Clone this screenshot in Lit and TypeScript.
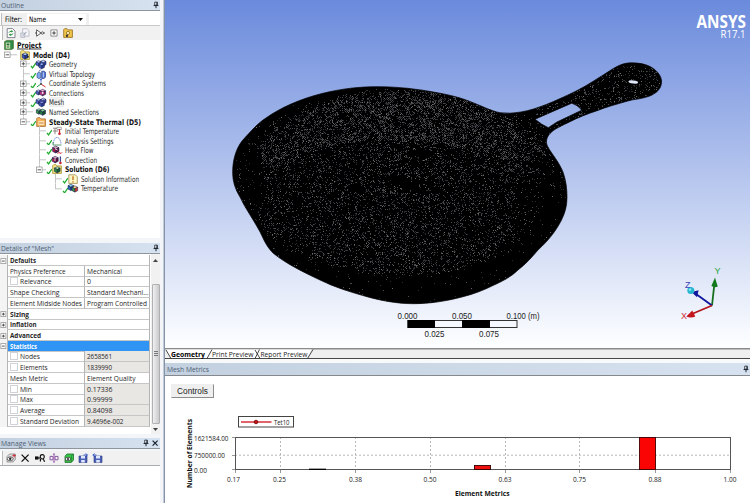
import { LitElement, html, css, svg, nothing } from "lit";
import { customElement } from "lit/decorators.js";

/* ---------- small icon set ---------- */
const cube = (a: string, b: string, c: string, x = 0, y = 0, s = 1) => svg`<g transform="translate(${x} ${y}) scale(${s})" stroke="#1b2050" stroke-width=".6" stroke-linejoin="round">
  <path d="M0 2 3 .5 6 2 3 3.5Z" fill=${a} /><path d="M0 2 3 3.5V7L0 5.5Z" fill=${b} /><path d="M6 2 3 3.5V7L6 5.5Z" fill=${c} /></g>`;
const cubes = svg`${cube("#a9c3ff", "#4a6fd0", "#2b459c", 0, 1.2, 0.85)}${cube("#c2d4ff", "#5c82e0", "#2b459c", 4.6, 0.6, 0.9)}${cube("#8fb0ff", "#3a5cc4", "#203a90", 3, 3.5, 0.9)}`;
const folder = svg`<path d="M.7 9.4V1.6L1.6.7H4l1 1.2h4.4v7.5Z" fill="#f7e68a" stroke="#a5902a" stroke-width=".8"/>`;
const disk = svg`<path d="M1 3h8v6.5H1Z" fill="#4b62b8" stroke="#27357a" stroke-width=".6"/><path d="M3 3h4v2.4H3ZM3.2 7h3.6v2.5H3.2Z" fill="#dfe7ff"/>`;
const ICONS: Record<string, unknown> = {
  project: svg`<path d="M.6 1.6 2.8.4h6.600v8L7.400 9.6H.6Z" fill="#2c8a49" stroke="#4c6a26" stroke-width=".7"/><path d="M1.800 2.600h4.400v6H1.800Z" fill="#e8edc0"/><path d="M2.600 3.600h2.800v1.800H2.600ZM2.600 6.600h2.800v1H2.600Z" fill="#287040"/>`,
  model: svg`${folder}${cube("#a9c3ff", "#3a5cc4", "#203a90", 2.2, 2.4, 0.95)}<path d="M7 6.8h2" stroke="#222"/>`,
  geometry: cubes,
  mesh: svg`${cubes}<path d="M1 4.5h8M5 2v6.5M7.5 2v6" stroke="#4b3f92" stroke-width=".5"/>`,
  topology: svg`<path d="M1 4.5 3 3l2 1.2v4.3L3 9.7 1 8.5Z" fill="#7fa5ea" stroke="#27407e" stroke-width=".6"/><path d="M5.7 2.2h2.6l1.2 1v5L8 9.5H5.7Z" fill="#4b73d6" stroke="#1e3170" stroke-width=".6"/><path d="M3 2.5 4.6.6" stroke="#27407e" stroke-width=".8"/><path d="M7.3 3.4v5" stroke="#dce6ff" stroke-width=".9"/>`,
  coords: svg`<path d="M5 6V1" stroke="#2b55cc" stroke-width="1" stroke-dasharray="1.6 .7"/><path d="M5 6 9.5 9" stroke="#d22" stroke-width="1"/><path d="M5 6 .8 9" stroke="#1c9a3c" stroke-width="1"/><circle cx="5" cy="6" r="1" fill="#555"/><path d="m3.8 2 1.2-1.8L6.2 2Z" fill="#2b55cc"/>`,
  connections: svg`${cube("#a9c3ff", "#5470c8", "#2b459c", 0, 1.4, 0.8)}${cube("#f4a6d0", "#c22a7c", "#7d1650", 3.6, 0.8, 1)}<circle cx="6.7" cy="5" r="1.3" fill="#fff" stroke="#8a1460" stroke-width=".6"/>`,
  named: svg`${cube("#9be29f", "#2f9a3e", "#17692a", 0.3, 1.2, 0.85)}${cube("#7fd289", "#23863a", "#105221", 3.8, 1.6, 0.95)}`,
  thermal: svg`<path d="M.7 9.4V1.6L1.6.7H4l1 1.2h4.4v7.5Z" fill="#f5b45c" stroke="#a5662a" stroke-width=".8"/><path d="M2.5 4h5.6v4H2.5Z" fill="#fbe3b9"/><path d="M3 6h4.6" stroke="#c86a2a" stroke-width=".8"/>`,
  initial: svg`<path d="M1 2.2h4M3 2.2v6M1 5h5" stroke="#7c6a6a" stroke-width=".8"/><path d="M5 1.3h4.3v2.2H5Z" fill="#fff" stroke="#555" stroke-width=".5"/><path d="M7.5 3v4" stroke="#c8232e" stroke-width="1.2"/><circle cx="7.5" cy="7.8" r="1.3" fill="#c8232e"/>`,
  settings: svg`<path d="M1.4 7.5Q2 1.5 5 1.5T9 7.5" fill="none" stroke="#3d6ad0" stroke-width=".8" stroke-dasharray="1.4 .6"/><path d="M1 9h8.5M1 9V6" stroke="#33804a" stroke-width=".8"/>`,
  heat: svg`${cube("#e9a2bb", "#b3164c", "#5c0d2c", 0.6, 0.6, 1.05)}<path d="M5.5 8.5q1.4-1.7 2.5-.5t2-.6" stroke="#d2202c" fill="none"/><path d="M3 3.8 5.5 5" stroke="#fff" stroke-width=".8"/>`,
  convection: svg`${cube("#e9a2bb", "#b3164c", "#5c0d2c", 0.2, 0.8, 1)}<path d="M3 3.8v2.4" stroke="#fff" stroke-width=".8"/><path d="M8.4 1.4v6" stroke="#404a8a" stroke-width="1.3"/><circle cx="8.4" cy="8" r="1.3" fill="#d2202c"/>`,
  solution: svg`${folder}${cube("#a5e8a2", "#29943b", "#12602a", 2.4, 2.2, 0.95)}`,
  info: svg`<path d="M.8.8h6.5l2 2v6.6H.8Z" fill="#fff8c8" stroke="#8a7a34" stroke-width=".7"/><path d="M5 2.2v3.8M5 7.2v1.2" stroke="#c06a10" stroke-width="1.3"/>`,
  temperature: svg`${cube("#7fd8ef", "#2a66c8", "#1f449c", 0, 0.8, 0.95)}${cube("#ffe17a", "#35a04a", "#d23a2a", 4, 2.4, 0.95)}`,
  refresh: svg`<path d="M1.2.6h5.4L9 3v6.6H1.2Z" fill="#fff" stroke="#556" stroke-width=".7"/><path d="M3 4.6Q3.6 2.8 5.8 3.4M7 5.4Q6.4 7.4 4.2 6.8" fill="none" stroke="#1f8d35" stroke-width="1"/><path d="m5.4 2 1.8 1.6-2 1ZM4.6 8.2 2.8 6.6l2-1Z" fill="#1f8d35"/>`,
  sheet: svg`<path d="M2.6.8h4.6L9 2.6v5.6H2.6Z" fill="#f6f6fa" stroke="#a9adb8" stroke-width=".7"/><path d="M.8 5h4v4.4h-4Z" fill="#dfe1ea" stroke="#a0a4b3" stroke-width=".6"/><path d="m3 7.6 3.6-3.8" stroke="#8a90a4" stroke-width=".9"/>`,
  probe: svg`<path d="M1.6 1.8v6.4L6 5Z" fill="#fff" stroke="#333" stroke-width=".8"/><path d="M0 5h1.6M8.6 5H10" stroke="#333" stroke-width=".8"/><circle cx="7.4" cy="5" r="1.2" fill="none" stroke="#333" stroke-width=".7"/>`,
  expand: svg`<path d="M1.9 1.9h6.2v6.2H1.9Z" fill="#fff" stroke="#777" stroke-width=".8"/><path d="M3.2 5h3.6M5 3.2v3.6" stroke="#222" stroke-width=".8"/>`,
  gearFolder: svg`<path d="M.7 9.4V1.6L1.6.7H4l1 1.2h4.4v7.5Z" fill="#f2c64a" stroke="#8f6a18" stroke-width=".8"/><circle cx="5" cy="5" r="1.6" fill="#fff2bd" stroke="#7b5a10" stroke-width=".7"/><circle cx="4" cy="7.8" r="1.2" fill="#403a2a"/>`,
  view: svg`<path d="M1 3.5 3.5 1h5.8v5.5L7 9H1Z" fill="#dcdcdc" stroke="#666" stroke-width=".6"/><ellipse cx="4.2" cy="5.8" rx="3" ry="1.9" fill="#fff" stroke="#333" stroke-width=".7"/><circle cx="4.2" cy="5.8" r="1.2" fill="#222"/><path d="M6.4 2.6h3.4M8.1 1v3.3" stroke="#c9202a" stroke-width=".9"/>`,
  close: svg`<path d="m1.6 1.6 7 7M8.6 1.6l-7 7" stroke="#111" stroke-width="1.3"/>`,
  rename: svg`<path d="M0 3.4h3.400v3.200H0Z" fill="#111"/><path d="M3 5h2.400" stroke="#111" stroke-width="1.200"/><path d="M5.400 4.600Q4.800 1.600 7.200 1.600T9.200 4.200Q9 6 7.200 6 6 6 5.400 4.600M8 5.600l1.600 3.200M5.400 6v2.600" fill="none" stroke="#111" stroke-width="1.200"/>`,
  edit: svg`<path d="M1 3.4h3v3.4H1ZM6 3.4h3v3.4H6Z" fill="none" stroke="#7e4a9a" stroke-width=".9"/><path d="M5 1v8M4 1h2M4 9h2" stroke="#8e3fa6" stroke-width=".8"/>`,
  apply: svg`<path d="M1 3.2 3 1h6.5v6L7.4 9.4H1Z" fill="#39c648" stroke="#1a6e2a" stroke-width=".8"/><ellipse cx="4" cy="6" rx="2.7" ry="1.7" fill="#fff" stroke="#333" stroke-width=".7"/><circle cx="4" cy="6" r="1" fill="#222"/><path d="M7.4 3v6M7.4 3 9.3 1" stroke="#1a6e2a" stroke-width=".6"/>`,
  importView: svg`${disk}<path d="M5.5 2h3.8M7.6.6 9.6 2 7.6 3.5" stroke="#3355cc" fill="none" stroke-width=".9"/>`,
  exportView: svg`<g transform="translate(1)">${disk}</g><path d="M4.5 2H1M2.6.6.8 2l1.8 1.5" stroke="#3355cc" fill="none" stroke-width=".9"/>`,
  pin: svg`<path d="M3.4 1.400h3.200v3.800H3.400Z" fill="#fff" stroke="#16202e" stroke-width="1"/><path d="M6.200 1.400v3.800M2 5.700h6M5 6v3" stroke="#16202e" stroke-width="1.2"/>`,
  x: svg`<path d="m2.6 2.6 5 5M7.6 2.6l-5 5" stroke="#16202e" stroke-width="1.2"/>`,
};
const icon = (name: string, size = 10) =>
  html`<svg class="icon" width=${size} height=${size} viewBox="0 0 10 10">${ICONS[name]}</svg>`;

const iconCss = css`
  :host { display: block; box-sizing: border-box; }
  .icon { display: block; flex: none; overflow: visible; }
`;

/* ---------- model tree ---------- */
interface Node { label: string; icon: string; level: number; box?: "+" | "-"; bold?: boolean; check?: boolean; sel?: boolean; width: number }
const TREE: Node[] = [
  { label: "Model (D4)", icon: "model", level: 0, box: "-", bold: true, width: 37 },
  { label: "Geometry", icon: "geometry", level: 1, box: "+", check: true, width: 28 },
  { label: "Virtual Topology", icon: "topology", level: 1, check: true, width: 46 },
  { label: "Coordinate Systems", icon: "coords", level: 1, box: "+", check: true, width: 57 },
  { label: "Connections", icon: "connections", level: 1, box: "+", check: true, width: 35 },
  { label: "Mesh", icon: "mesh", level: 1, box: "+", check: true, sel: true, width: 15 },
  { label: "Named Selections", icon: "named", level: 1, box: "+", width: 50 },
  { label: "Steady-State Thermal (D5)", icon: "thermal", level: 1, box: "-", bold: true, check: true, width: 92 },
  { label: "Initial Temperature", icon: "initial", level: 2, check: true, width: 54 },
  { label: "Analysis Settings", icon: "settings", level: 2, check: true, width: 48.5 },
  { label: "Heat Flow", icon: "heat", level: 2, check: true, width: 28.5 },
  { label: "Convection", icon: "convection", level: 2, check: true, width: 32 },
  { label: "Solution (D6)", icon: "solution", level: 2, box: "-", bold: true, check: true, width: 44.5 },
  { label: "Solution Information", icon: "info", level: 3, check: true, width: 58 },
  { label: "Temperature", icon: "temperature", level: 3, check: true, width: 37 },
];

/* A single line of text set to a fixed measure. */
const line = (s: string, w: number, cls = "") =>
  html`<svg class="line ${cls}" width=${w} height="10"><text x="0" y="7.6" textLength=${w} lengthAdjust="spacingAndGlyphs">${s}</text></svg>`;

@customElement("outline-tree")
class OutlineTree extends LitElement {
  static styles = [iconCss, css`
    :host { height: 198px; padding-top: .4px; background: #fff; font: 7.8px "DejaVu Sans Condensed", "DejaVu Sans", sans-serif; color: #222; }
    .row { display: flex; align-items: center; height: 9.55px; }
    .pad { flex: none; width: 16px; height: 100%; }
    .lead { display: block; flex: none; }
    .line { display: block; flex: none; overflow: visible; margin-left: 3px; }
    .line text { fill: #2a2a2a; }
    .bold text { font-weight: 700; fill: #111; }
    .sel { background: #f0f0f0; }
    .under { text-decoration: underline; }
    .root { padding-left: 4px; }
    .root .line { margin-left: 2.5px; }
  `];
  render() {
    return html`
      <div class="row root">${icon("project")}${line("Project", 24.5, "bold under")}</div>
      ${TREE.map((n, i) => {
        const pads = [];
        for (let l = 0; l < n.level; l++) pads.push(html`<div class="pad"></div>`);
        const more = TREE.slice(i + 1).findIndex((m) => m.level <= n.level);
        const cont = more >= 0 && TREE[i + 1 + more].level === n.level;
        return html`<div class="row">${pads}
          <svg class="lead" width="20" height="9.55" viewBox="0 0 20 9.55">
            ${n.level ? svg`<path d="M7.5 0V${cont ? 9.6 : 4.8}" stroke="#c4c4c4" fill="none"/>` : nothing}
            <path d="M7 4.8H${n.check ? 14 : 17}" stroke="#c4c4c4"/>
            ${n.box ? svg`<rect x="4.5" y="2" width="5.6" height="5.6" fill="#fff" stroke="#999" stroke-width=".8"/><path d="M5.6 4.8h3.4${n.box === "+" ? "M7.3 3.1v3.4" : ""}" stroke="#333" stroke-width=".8"/>` : nothing}
            ${n.check ? svg`<path d="m15 7 1.600 1.900L19.800 4.200" fill="none" stroke="#1fae30" stroke-width="1.200"/>` : nothing}
          </svg>
          ${icon(n.icon)}${line(n.label, n.width, `${n.bold ? "bold" : ""} ${n.sel ? "sel" : ""}`)}
        </div>`;
      })}`;
  }
}

/* ---------- details grid ---------- */
interface Row { name: string; w: number; value?: string; vw?: number; group?: "+" | "-"; box?: boolean; grey?: boolean; sel?: boolean }
const ROWS: Row[] = [
  { name: "Defaults", w: 26, group: "-" },
  { name: "Physics Preference", w: 55.5, value: "Mechanical", vw: 35 },
  { name: "Relevance", w: 31.5, value: "0", vw: 4, box: true },
  { name: "Shape Checking", w: 49.5, value: "Standard Mechani...", vw: 61.5 },
  { name: "Element Midside Nodes", w: 72, value: "Program Controlled", vw: 60 },
  { name: "Sizing", w: 19, group: "+" },
  { name: "Inflation", w: 26.5, group: "+" },
  { name: "Advanced", w: 31, group: "+" },
  { name: "Statistics", w: 27, group: "-", sel: true },
  { name: "Nodes", w: 20, value: "2658561", vw: 25, box: true, grey: true },
  { name: "Elements", w: 27.5, value: "1839990", vw: 25, box: true, grey: true },
  { name: "Mesh Metric", w: 38, value: "Element Quality", vw: 48.5 },
  { name: "Min", w: 12, value: "0.17336", vw: 25.5, box: true, grey: true },
  { name: "Max", w: 13, value: "0.99999", vw: 25.5, box: true, grey: true },
  { name: "Average", w: 25, value: "0.84098", vw: 25.5, box: true, grey: true },
  { name: "Standard Deviation", w: 59, value: "9.4696e-002", vw: 36.5, box: true, grey: true },
];

@customElement("details-grid")
class DetailsGrid extends LitElement {
  static styles = [iconCss, css`
    :host { display: flex; height: 180.3px; background: #fff; font: 7.6px "Open Sans", "Noto Sans", sans-serif; }
    .rows { width: 150px; padding-top: 1.5px; }
    .row { display: grid; grid-template-columns: 7px 77px 66px; height: 10.73px; }
    .cell { display: flex; align-items: center; border-left: 1px solid #b4b4b4; border-bottom: 1px solid #c6c6c6; padding-left: 2px; box-sizing: border-box; }
    .value { border-right: 1px solid #b4b4b4; }
    .wide { grid-column: 2 / 4; padding-left: 1.5px; border-right: 1px solid #b4b4b4; }
    .wide text { font-weight: 700; fill: #111; }
    .grey { background: #e9e7e4; }
    .sel .wide { background: #3094f4; }
    .sel .wide text { fill: #fff; }
    .line { display: block; flex: none; overflow: visible; }
    .line text { fill: #262626; }
    .tick { width: 6px; height: 6px; border: 1px solid #cfd2d6; background: #fff; margin-right: 2.5px; flex: none; margin-left: -.5px; }
    .gut { background: #f4f4f4; display: flex; align-items: center; }
    .bar { display: flex; flex-direction: column; align-items: center; justify-content: space-between; width: 9px; margin-left: 1px; background: #f1f1f1; padding: 5px 0 3px; box-sizing: border-box; }
    .thumb { display: flex; flex-direction: column; align-items: center; justify-content: center; gap: 1px; width: 8px; height: 140px; margin-top: 22px; margin-bottom: auto; border: 1px solid #b0b0b0; border-radius: 1px; box-sizing: border-box; background: linear-gradient(90deg, #f0f0f0, #c9c9cc); }
    .grip { width: 4px; height: 1px; background: #777; }
  `];
  render() {
    return html`<div class="rows">${ROWS.map((r) => html`
      <div class="row ${r.sel ? "sel" : ""}">
        <div class="gut">${r.group ? html`<svg class="icon" width="7" height="8"><rect x=".9" y="1.6" width="5" height="5" fill="#fff" stroke="#999" stroke-width=".8"/><path d="M2 4.1h2.8${r.group === "+" ? "M3.4 2.7v2.8" : ""}" stroke="#333" stroke-width=".8"/></svg>` : nothing}</div>
        ${r.group
          ? html`<div class="cell wide">${line(r.name, r.w)}</div>`
          : html`<div class="cell">${r.box ? html`<span class="tick"></span>` : nothing}${line(r.name, r.w)}</div>
              <div class="cell value ${r.grey ? "grey" : ""}">${line(r.value!, r.vw!)}</div>`}
      </div>`)}</div>
      <div class="bar">
        <svg width="5" height="3"><path d="M0 3 2.5 0 5 3Z" fill="#444"/></svg>
        <div class="thumb"><i class="grip"></i><i class="grip"></i><i class="grip"></i></div>
        <svg width="5" height="3"><path d="M0 0 2.5 3 5 0Z" fill="#444"/></svg>
      </div>`;
  }
}

/* ---------- 3D viewport ---------- */
const PAN = "M232.7 173C232.5 160 236 149 242 141C251 131 258 123 266 118C280 108 300 99 322 93.500C342 88.500 360 86.700 378 86.700C398 86.700 418 89 436 92.500C450 95 460 97.500 470 101.500C482 106 491 111 500 112.700Q510 114 521 112C538 109 555 101 570 94C583 88 592 82 600 77C610 71 617 65 626 63.300C633 62.300 641 63 647 65.200C656 68.500 662 76 661.500 82C661.500 89 656 93.500 649 96.300C642 99 634 99 627 101.200C616 104.500 606 107 597 110.700C587 114 578 117.500 570 121.700C562 125.500 554 129 550 133.500C546 138 545.500 143 548 147C551 153 560 163 563.500 173.500C566 181 567 189 567 197C567 206 565 213 561.500 220C556 231 548 241 538 250C532 257 526 264 518 270C511 277 502 281.500 493 285.500C484 290 474 294 463 296.700C447 301 430 303.700 413 303.700C397 303.700 381 300.500 367 296.700C350 292 334 287 320 280C303 272 285 263 273 253C265 245 263 237 259 230C253 219 245 208 240 197C235 189 232.700 181 232.700 173ZM535 119.200 571.700 103.200Q578 105 581.700 110.200L557 122 548.300 127.700Q542 125 535 119.200Z";

/* Mesh facets: sparse one-pixel flecks whose density follows the surface. */
const flecks = (() => {
  let seed = 20177;
  const rnd = () => ((seed = (seed * 1664525 + 1013904223) >>> 0) / 4294967296);
  const e = (x: number, y: number, cx: number, cy: number, rx: number, ry: number) => ((x - cx) / rx) ** 2 + ((y - cy) / ry) ** 2;
  const patch = Array.from({ length: 110 * 64 }, () => 0.35 + rnd() * 1.3);
  const out = ["", "", ""];
  for (let y = 66; y < 302; y++) {
    for (let x = 234; x < 660; x++) {
      const v = rnd(), tone = rnd();
      let d = 0.01;
      if (x > 535 && y < 128) d = 0.13;
      else if (e(x, y, 400, 183, 160, 95) < 1 && y < 282) {
        const floor = e(x, y, 393, 222, 150, 83) < 1;
        d = floor ? 0.26 : 0.5;
        if (!floor && y > 185) d = 0.12;
        d *= 1 - 0.3 * Math.min(1, Math.abs(x - 400) / 160);
        d *= Math.min(1, (1.02 - e(x, y, 400, 183, 160, 95)) * 7);
        if (e(x, y, 545, 205, 30, 50) < 1) d *= 0.35;
        const core = Math.min(e(x - (y - 183) * 1.2, y, 403, 183, 17, 9), e(x, y, 422, 153, 15, 4), e(x, y, 355, 187, 8, 5));
        if (core < 1.4) d *= Math.max(0.06, core - 0.4);
        if (e(x, y, 246, 180, 18, 30) < 1) d = 0.03;
        d *= patch[((y - 60) >> 2) * 110 + ((x - 230) >> 2)];
        if ((x + y) % 2) d *= 0.4;
      } else if (e(x, y, 400, 178, 165, 90) < 1) d = 0.08;
      if (v < d) out[tone < 0.55 ? 0 : tone < 0.93 ? 1 : 2] += `M${x} ${y}h1v1h-1z`;
    }
  }
  return out;
})();

@customElement("model-view")
class ModelView extends LitElement {
  static styles = css`
    :host { display: block; height: 348px; background: linear-gradient(#6a8adc, #fdfeff 346px); }
    .scene { display: block; font-family: "Liberation Sans", Arial, sans-serif; }
    .logo { font: 700 17px "Open Sans", "Noto Sans", sans-serif; fill: #fff; }
    .ver { font: 10.4px "Open Sans", "Noto Sans", sans-serif; fill: #fff; }
    .scale { font-size: 8.4px; fill: #222; }
    .axis { font-size: 9px; }
  `;
  render() {
    const tick = (s: string, x: number, y: number, w: number) => svg`<text class="scale" x=${x} y=${y} textLength=${w} lengthAdjust="spacingAndGlyphs">${s}</text>`;
    return html`<svg class="scene" width="585" height="348" viewBox="165 0 585 348">
      <defs><clipPath id="pan"><path d=${PAN} clip-rule="evenodd"/></clipPath></defs>
      <path d=${PAN} fill="#000" fill-rule="evenodd"/>
      <g clip-path="url(#pan)" shape-rendering="crispEdges">
        <path d=${flecks[0]} fill="#2b2d31"/><path d=${flecks[1]} fill="#484a4d"/><path d=${flecks[2]} fill="#6d6b66"/>
      </g>
      <path d=${PAN} fill="none" stroke="#000" stroke-width=".7"/>
      <ellipse cx="633.300" cy="82" rx="4.800" ry="1.600" fill="#dfe7fb" transform="rotate(6 633 82)"/>
      <text class="logo" x="696.500" y="27.500" textLength="49.500" lengthAdjust="spacingAndGlyphs">ANSYS</text>
      <text class="ver" x="720.500" y="38" textLength="25" lengthAdjust="spacingAndGlyphs">R17.1</text>
      ${tick("0.000", 397.5, 318.8, 20)}${tick("0.050", 452, 318.8, 20)}${tick("0.100 (m)", 506.5, 318.8, 33)}
      ${tick("0.025", 424.5, 336.8, 20)}${tick("0.075", 479, 336.8, 20)}
      <rect x="408" y="320.500" width="109" height="7" fill="#f5f8ff" stroke="#333" stroke-width="1"/>
      <path d="M407.500 320h27.500v8h-27.500ZM462 320h28v8h-28Z" fill="#000"/>
      <path d="M712 305.500 714.500 283" stroke="#156e1a" stroke-width="1.800"/><path d="M711.300 286 715 277.500 717.800 286.500Q714.500 288 711.300 286Z" fill="#137a1c"/>
      <path d="M712 305.500 696 294" stroke="#10169c" stroke-width="1.800"/><path d="m698.600 290.300-1.600 7-5.500-5.300Z" fill="#10169c"/><circle cx="690.800" cy="290.500" r="3.500" fill="#27b5cf"/><circle cx="690" cy="289.600" r="1.300" fill="#7de4ef"/>
      <path d="M712 305.500 693 313.500" stroke="#b3161c" stroke-width="1.800"/><path d="M686.300 316.500 692.300 310.500 695.300 316.500Q691 318.500 686.300 316.500Z" fill="#c4151c"/>
      <text class="axis" x="714.500" y="273.500" fill="#2ba53c">Y</text>
      <text class="axis" x="685" y="287.500" fill="#3a41b8">Z</text>
      <text class="axis" x="681" y="319.300" fill="#cf2a34">X</text>
    </svg>`;
  }
}

/* ---------- metrics chart ---------- */
@customElement("metrics-chart")
class MetricsChart extends LitElement {
  static styles = css`
    :host { display: block; flex: 1; background: #fff; padding: 8px 0 0 6px; }
    .btn { display: block; width: 43px; height: 14px; padding: 0; border: 1px solid; border-color: #eee #8d8d8d #8d8d8d #eee; background: #efefef; font: 8.300px/12px "Liberation Sans", Arial, sans-serif; color: #222; text-align: center; }
    .plot { display: block; margin: -22px 0 0 -6px; pointer-events: none; font: 7.500px "Open Sans", "Noto Sans", sans-serif; }
    .bold { font-weight: 700; fill: #111; }
  `;
  render() {
    const t = (s: string, x: number, y: number, w: number, cls = "") => svg`<text class=${cls} x=${x} y=${y} textLength=${w} lengthAdjust="spacingAndGlyphs" fill="#222">${s}</text>`;
    const ticks: [string, number][] = [["0.17", 233.5], ["0.25", 279.5], ["0.38", 355.5], ["0.50", 430], ["0.63", 505], ["0.75", 579.5], ["0.88", 655], ["1.00", 730]];
    return html`<button class="btn">Controls</button>
      <svg class="plot" width="585" height="127" viewBox="165 376 585 127">
        <rect x="238.500" y="416.500" width="55" height="10.500" fill="#fff" stroke="#444"/>
        <path d="M241 422h30.500" stroke="#d01018" stroke-width="1.300"/><circle cx="256" cy="422" r="1.800" fill="#d01018" stroke="#600" stroke-width=".8"/>
        ${t("Tet10", 274, 424.8, 15.5)}
        <path d="M235 455.200h495M280.500 437v33M355.500 437v33M430.500 437v33M505.500 437v33M579.500 437v33M655 437v33" stroke="#b8b8b8" stroke-dasharray="2 2" fill="none"/>
        <path d="M232 437.500h3M232 455.500h3M232 469.500h3M235.500 470v3M280.500 470v3M355.500 470v3M430.500 470v3M505.500 470v3M579.500 470v3M655.500 470v3M730.500 470v3" stroke="#999"/>
        <rect x="235.500" y="437.500" width="495" height="32" fill="none" stroke="#555"/>
        <path d="M309 469.300h17" stroke="#000" stroke-width="1.300"/>
        <rect x="474.500" y="465.500" width="16" height="4" fill="#f01010" stroke="#300" stroke-width=".9"/>
        <rect x="639.500" y="437.500" width="16" height="32" fill="#fb0404" stroke="#400" stroke-width=".9"/>
        ${t("1621584.00", 194, 440.6, 34.5)}${t("750000.00", 194, 458.4, 31)}${t("0.00", 194, 473.2, 13)}
        ${ticks.map(([s, x]) => t(s, x - 6.5, 482.3, 13))}
        ${t("Element Metrics", 455, 496, 54.5, "bold")}
        <g transform="translate(191.500 488) rotate(-90)">${t("Number of Elements", 0, 0, 69, "bold")}</g>
      </svg>`;
  }
}

/* ---------- shell ---------- */
@customElement("app-root")
class AppRoot extends LitElement {
  static styles = [iconCss, css`
    :host { display: grid; grid-template-columns: 160px 585px; column-gap: 5px; width: 750px; height: 503px; overflow: hidden; background: #f3f5f9; font: 7.600px "Open Sans", "Noto Sans", sans-serif; }
    .side { display: flex; flex-direction: column; height: 503px; min-width: 0; }
    .main { display: flex; flex-direction: column; height: 503px; min-width: 0; box-shadow: -1px 0 #8793a6, -2px 0 #c2cbd8; }
    .head { display: flex; align-items: center; flex: none; height: 11px; padding: 0 0 0 1px; box-sizing: border-box; background: linear-gradient(90deg, #c3d0df, #d6e2ef); border-bottom: 1px solid #8f959d; }
    .line { display: block; flex: none; overflow: visible; }
    .head .line { margin-right: auto; }
    .head .line text { fill: #4d6075; }
    .first .line { margin-top: -1px; }
    .filter { display: flex; align-items: center; flex: none; width: 88px; height: 12px; margin: 2px 0 0 1px; padding-left: 3px; box-sizing: border-box; border-left: 1px solid #bbb; background: #f0f0f0; font: 7.600px "DejaVu Sans Condensed", "DejaVu Sans", sans-serif; }
    .combo { display: flex; align-items: center; gap: 32px; height: 11px; width: 59px; padding-left: 2px; margin-left: 4.500px; background: #fff; box-sizing: border-box; }
    .tools { display: flex; align-items: center; gap: 4.300px; flex: none; height: 14px; padding-left: 6px; box-shadow: inset 2px 0 #fff, inset 3px 0 #bbb; background: #f1f1f1; }
    .band { flex: none; height: 29px; background: #fff; }
    .band .tools { border-top: 1px solid #c9c9c9; }
    .gap { flex: none; height: 4.500px; }
    .views { height: 14px; gap: 4.400px; margin: 2px 0 0; }
    .blank { flex: 1; background: #fff; border-top: 1px solid #a9aeb6; }
    .tabs { display: block; flex: none; }
    .strip { height: 4px; background: #f8f9fb; flex: none; }
    .metric { height: 13px; border-bottom: 1.500px solid #85898e; padding-left: 2px; }
  `];
  render() {
    return html`
      <div class="side">
        <div class="head first">${line("Outline", 23)}${icon("pin", 8)}</div>
        <div class="band">
          <div class="filter">${line("Filter:", 17)}<div class="combo">${line("Name", 17)}<svg width="5" height="3"><path d="M0 0h5L2.500 3Z" fill="#111"/></svg></div></div>
          <div class="tools">${["refresh", "sheet", "probe", "expand", "gearFolder"].map((n) => icon(n))}</div>
        </div>
        <outline-tree></outline-tree>
        <div class="gap"></div>
        <div class="head">${line('Details of "Mesh"', 53)}${icon("pin", 8)}</div>
        <details-grid></details-grid>
        <div class="gap"></div>
        <div class="head">${line("Manage Views", 45)}${icon("pin", 8)}${icon("x", 10)}</div>
        <div class="tools views">${["view", "close", "rename", "edit", "apply", "importView", "exportView"].map((n) => icon(n))}</div>
        <div class="blank"></div>
      </div>
      <div class="main">
        <model-view></model-view>
        <svg class="tabs" width="585" height="11" viewBox="165 348 585 11">
          <path d="M165 348h585v11H165Z" fill="#efefef"/><path d="M165 348.800h585" stroke="#8a8a8a" stroke-width="1.500"/>
          <path d="M166 349.500h145.500l-4.500 9H171Z" fill="#fff"/>
          <path d="M165 358.500h585M166 350l5 8.500M207 358.500l5-9M255 350l5 8.500M255 358.500l4.500-9M307.500 358.500l5.500-9" stroke="#333" fill="none" stroke-width=".9"/>
          <text x="171" y="356.800" font-weight="700" textLength="34" lengthAdjust="spacingAndGlyphs">Geometry</text>
          <text x="212" y="356.800" textLength="41.500" lengthAdjust="spacingAndGlyphs" fill="#222">Print Preview</text>
          <text x="260.500" y="356.800" textLength="47" lengthAdjust="spacingAndGlyphs" fill="#222">Report Preview</text>
        </svg>
        <div class="strip"></div>
        <div class="head metric">${line("Mesh Metrics", 42)}${icon("pin", 8)}</div>
        <metrics-chart></metrics-chart>
      </div>`;
  }
}
